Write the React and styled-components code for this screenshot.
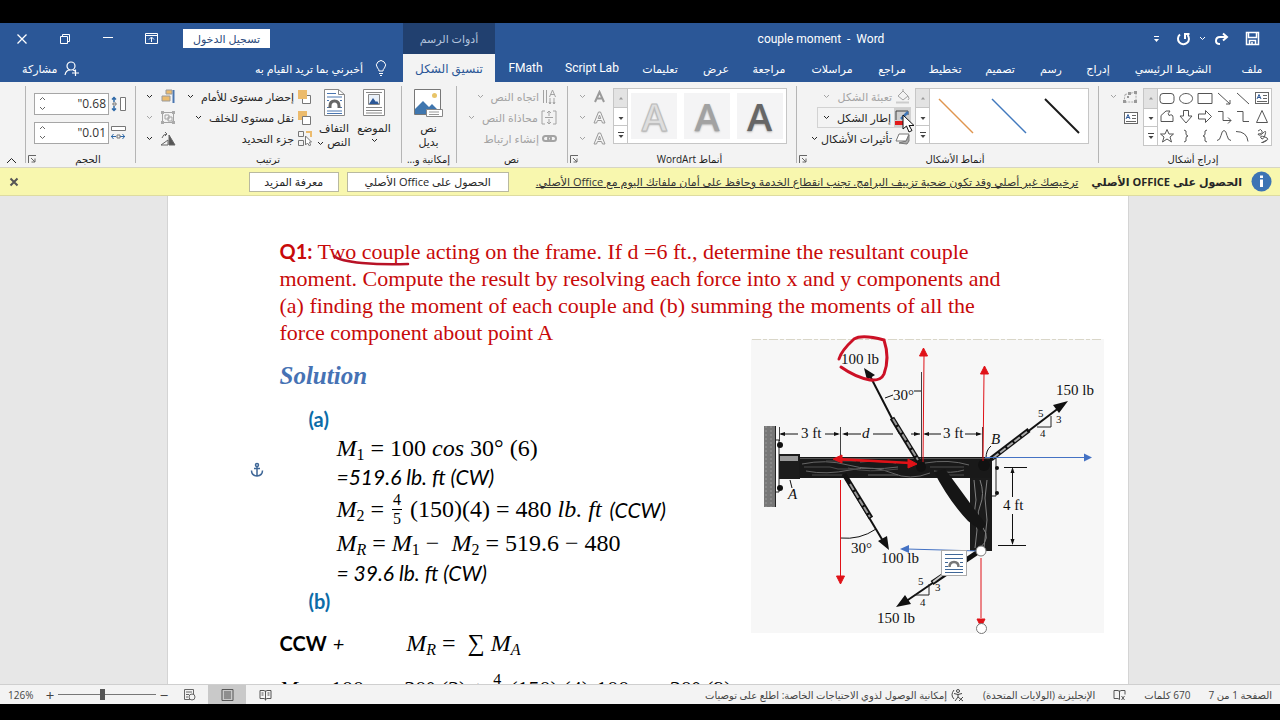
import React from "react";
import styled, { createGlobalStyle, css } from "styled-components";

const GlobalStyle = createGlobalStyle`
  * { box-sizing: border-box; }
  body { margin: 0; background: #000; }
  button { font: inherit; color: inherit; border: 0; background: none; padding: 0; margin: 0; }
`;

const blue = "#2b5797";

const Screen = styled.div`
  height: 100vh;
  min-height: 480px;
  display: flex;
  flex-direction: column;
  padding: 23px 0 16px;
  overflow: hidden;
  background: #000;
  font-family: "Open Sans", "DejaVu Sans", sans-serif;
  font-size: 11px;
  color: #262626;
`;

/* ---------- header ---------- */
const Header = styled.header`
  background: ${blue};
  color: #fff;
`;
const HeaderRow = styled.div`
  direction: rtl;
  display: grid;
  grid-template-columns: minmax(0, 785px) 92px 1fr;
  height: ${(p) => p.$h}px;
`;
const TitleArea = styled.div`
  display: flex;
  align-items: center;
`;
const QuickAccess = styled.div`
  width: 133px;
  display: flex;
  align-items: center;
  gap: 8px;
  padding-right: 20px;
`;
const IconButton = styled.button`
  display: flex;
  align-items: center;
  justify-content: center;
  flex: none;
`;
const DocTitle = styled.h1`
  flex: 1;
  margin: 0;
  text-align: center;
  direction: ltr;
  font-family: Roboto, sans-serif;
  font-size: 12px;
  font-weight: 400;
  white-space: pre;
`;
const ContextHeading = styled.div`
  display: flex;
  align-items: center;
  justify-content: center;
  background: #21406f;
  color: #b4c4de;
`;
const WindowArea = styled.div`
  direction: ltr;
  display: flex;
  align-items: center;
  padding-left: 16px;
  gap: 31px;
`;
const SignIn = styled.button`
  height: 19px;
  width: 87px;
  background: #fff;
  color: #2a4a7c;
  white-space: nowrap;
  margin-left: -6px;
`;
const Tabs = styled.nav`
  display: flex;
`;
const Tab = styled.button`
  width: ${(p) => p.$w}px;
  white-space: nowrap;
  ${(p) => p.$latin && css`font-family: Roboto, sans-serif; font-size: 12px;`}
  ${(p) => p.$active && css`background: #f3f3f3; color: ${blue}; font-size: 12px;`}
`;
const TellArea = styled.div`
  display: flex;
  align-items: center;
  justify-content: space-between;
  padding: 0 16px 0 22px;
`;
const TellMe = styled.button`
  display: flex;
  align-items: center;
  gap: 12px;
  white-space: nowrap;
`;
const Share = styled(TellMe)`
  gap: 6px;
`;

/* ---------- ribbon ---------- */
const Ribbon = styled.section`
  direction: rtl;
  display: flex;
  height: 86px;
  background: #f3f3f3;
  border-bottom: 1px solid #d6d5c4;
  padding-right: 8px;
`;
const Group = styled.div`
  flex: 0 1 ${(p) => p.$w}px;
  position: relative;
  display: flex;
  flex-direction: column;
  padding-top: 4px;
  &::after {
    content: "";
    position: absolute;
    left: 0;
    top: 4px;
    bottom: 4px;
    border-left: 1px solid #b5b5b5;
  }
`;
const GroupBody = styled.div`
  display: flex;
  height: 64px;
  padding: 0 ${(p) => p.$pad || 0}px;
  justify-content: ${(p) => p.$justify || "flex-start"};
`;
const GroupLabel = styled.div`
  height: 17px;
  display: flex;
  align-items: center;
  justify-content: center;
  white-space: nowrap;
  font-size: 10px;
  color: #222;
  padding-right: ${(p) => (p.$shift ? 16 : 0)}px;
  direction: ltr;
  & > span { direction: rtl; }
  padding-right: 0;
  padding-left: ${(p) => (p.$shift ? 16 : 0)}px;
`;
const LauncherButton = styled.button`
  position: absolute;
  left: 3px;
  bottom: 4px;
  display: flex;
`;
const Collapse = styled.div`
  flex: 1;
  display: flex;
  align-items: flex-end;
  justify-content: flex-end;
  padding: 0 0 3px 6px;
`;
const GalleryBox = styled.div`
  display: flex;
  flex: none;
  height: ${(p) => p.$h || 56}px;
  width: ${(p) => p.$w}px;
  margin-top: 2px;
  background: #fff;
  border: 1px solid #c6c6c6;
`;
const GalleryItems = styled.div`
  flex: 1;
  display: grid;
  grid-template-columns: repeat(${(p) => p.$cols}, 1fr);
  place-items: center;
`;
const ScrollCol = styled.div`
  width: 14px;
  display: grid;
  grid-template-rows: repeat(3, 1fr);
  border-right: 1px solid #c6c6c6;
`;
const ScrollButton = styled.button`
  display: flex;
  align-items: center;
  justify-content: center;
  background: ${(p) => (p.$off ? "#e3e3e3" : "#fff")};
  & + & { border-top: 1px solid #c6c6c6; }
`;
const WordArtTile = styled.button`
  width: 46px;
  height: 46px;
  background: #f4f4f5;
  color: ${(p) => p.$c};
  font-size: 38px;
  line-height: 46px;
  font-weight: 600;
  text-shadow: 0 1px 2px #aaa;
  -webkit-text-stroke: ${(p) => (p.$outline ? "1px #bbb" : "0")};
`;
const Column = styled.div`
  display: flex;
  flex-direction: column;
  width: ${(p) => (p.$w ? p.$w + "px" : "auto")};
  padding-right: ${(p) => p.$inset || 0}px;
  padding-top: ${(p) => p.$top || 0}px;
`;
const Command = styled.button`
  display: flex;
  align-items: center;
  gap: ${(p) => p.$gap || 3}px;
  height: 21px;
  padding: 0 1px;
  white-space: nowrap;
  color: ${(p) => (p.$off ? "#a3a3a3" : "#262626")};
  ${(p) => p.$hot && css`outline: 1px solid #d2d2d2; outline-offset: -1px;`}
  & > svg { flex: none; }
  & > svg + svg { margin-right: 4px; }
`;
const HotIcon = styled.span`
  position: relative;
  display: flex;
  padding: 2px 1px;
  background: #cfcfcf;
`;
const Pointer = styled.svg`
  position: absolute;
  left: 8px;
  top: 6px;
  z-index: 2;
`;
const BigButton = styled.button`
  display: flex;
  flex-direction: column;
  align-items: center;
  width: ${(p) => p.$w}px;
  padding-top: 3px;
  line-height: 14px;
  white-space: nowrap;
`;
const BigIcon = styled.span`
  height: 32px;
`;
const SizeRow = styled.label`
  display: flex;
  align-items: center;
  gap: 1px;
  height: 29px;
  & > svg { flex: none; }
`;
const SizeField = styled.span`
  display: flex;
  align-items: center;
  flex: none;
  width: 75px;
  height: 22px;
  background: #fff;
  border: 1px solid #a6a6a6;
  padding: 0 2px 0 4px;
`;
const SizeInput = styled.input`
  flex: 1;
  min-width: 0;
  border: 0;
  padding: 0;
  background: none;
  font: 12px "Open Sans", sans-serif;
  color: #333;
  direction: rtl;
  outline: 0;
`;
const Spin = styled.span`
  display: flex;
  flex-direction: column;
  gap: 5px;
  color: #666;
`;

/* ---------- message bar ---------- */
const MessageBar = styled.section`
  direction: rtl;
  display: flex;
  align-items: center;
  height: 28px;
  background: #f8f7ae;
  border-bottom: 1px solid #dedca0;
  padding: 0 8px 0 9px;
  white-space: nowrap;
`;
const MessageTitle = styled.strong`
  margin: 0 9px 0 13px;
`;
const MessageLink = styled.a`
  color: #333;
  text-decoration: underline;
`;
const MessageButton = styled.button`
  width: ${(p) => p.$w}px;
  height: 20px;
  background: #fff;
  border: 1px solid #b9b9a0;
  margin-right: ${(p) => p.$gap}px;
`;
const Spacer = styled.div`
  flex: 1;
`;

/* ---------- document ---------- */
const Workspace = styled.main`
  flex: 1;
  min-height: 0;
  overflow: hidden;
  display: flex;
  justify-content: center;
  padding-left: 15px;
  background: #e7e7e7;
`;
const Page = styled.article`
  width: 962px;
  height: 1200px;
  flex: none;
  background: #fff;
  border: solid #d4d4d4;
  border-width: 0 1px;
  padding: 42px 24px 0 112px;
  font-family: Lato, sans-serif;
  font-size: 20px;
  color: #000;
`;
const Question = styled.p`
  margin: 0;
  font-family: "Liberation Serif", serif;
  font-size: 22px;
  line-height: 27px;
  color: #c80a0a;
  white-space: nowrap;
`;
const Line = styled.span`
  display: block;
`;
const Inked = styled.span`
  position: relative;
`;
const InkLine = styled.svg`
  position: absolute;
  left: 14px;
  top: 15px;
`;
const QLabel = styled.b`
  font-family: Lato, sans-serif;
  font-size: 20px;
`;
const Columns = styled.div`
  display: flex;
  align-items: flex-start;
  justify-content: space-between;
`;
const Solution = styled.h2`
  margin: 16px 0 14px;
  font: italic bold 25px/28px "Liberation Serif", serif;
  color: #4672b4;
`;
const PartLabel = styled.h3`
  margin: 0;
  padding-left: 29px;
  font-size: 20px;
  line-height: 30px;
  color: #0c6ca8;
`;
const Step = styled.div`
  position: relative;
  display: flex;
  align-items: center;
  gap: ${(p) => p.$gap || 6}px;
  height: ${(p) => p.$h || 28}px;
  padding-left: ${(p) => (p.$flush ? 0 : 57)}px;
  margin-top: ${(p) => p.$mt || 0}px;
  white-space: nowrap;
  ${(p) => p.$italic && css`font-style: italic; font-size: 21px;`}
`;
const MathText = styled.span`
  font-family: "Liberation Serif", serif;
  font-size: ${(p) => (p.$small ? 22 : 24)}px;
  font-style: normal;
  sub { font-size: 16px; line-height: 0; vertical-align: -4px; }
`;
const Frac = styled.span`
  display: inline-flex;
  flex-direction: column;
  align-items: center;
  font: 16px/17px "Liberation Serif", serif;
  & > span:first-child { border-bottom: 1px solid #000; padding: 0 1px 1px; }
`;
const Anchor = styled.svg`
  position: absolute;
  left: -30px;
  top: 0;
`;
const Sum = styled.div`
  margin-left: 56px;
`;
const Figure = styled.figure`
  margin: -7px 0 0;
  svg { display: block; overflow: visible; }
`;

/* ---------- status bar ---------- */
const StatusBar = styled.footer`
  display: flex;
  align-items: center;
  height: 20px;
  background: #f3f3f3;
  border-top: 1px solid #cfcfcf;
  padding: 0 8px;
  font-size: 10px;
  color: #444;
  white-space: nowrap;
`;
const StatusSide = styled.div`
  direction: ${(p) => (p.$rtl ? "rtl" : "ltr")};
  display: flex;
  align-items: center;
  height: 100%;
  gap: ${(p) => p.$gap || 0}px;
`;
const ZoomValue = styled.button`
  width: 36px;
  text-align: left;
`;
const ZoomStep = styled.button`
  width: 12px;
  font-size: 15px;
  line-height: 18px;
`;
const ZoomSlider = styled.input`
  appearance: none;
  width: 98px;
  height: 11px;
  margin: 0 2px;
  background: linear-gradient(#777, #777) center / 100% 1px no-repeat;
  &::-webkit-slider-thumb { appearance: none; width: 5px; height: 11px; background: #555; }
`;
const ViewButton = styled(IconButton)`
  width: 38px;
  height: 100%;
  background: ${(p) => (p.$on ? "#c9c9c9" : "none")};
`;

/* ---------- icons ---------- */
const Ico = ({ w = 16, h = w, box, children, stroke = "currentColor", sw = 1, fill = "none" }) => (
  <svg width={w} height={h} viewBox={box || `0 0 ${w} ${h}`} fill={fill} stroke={stroke} strokeWidth={sw} aria-hidden="true">
    {children}
  </svg>
);
const Caret = ({ up }) => (
  <Ico w={7} h={5}>
    <path d={up ? "M1 4 3.500 1.500 6 4" : "M1 1 3.500 3.500 6 1"} />
  </Ico>
);
const Tri = ({ kind }) => (
  <Ico w={8} h={8} stroke={kind === "up" ? "#999" : "#444"}>
    {kind === "more" && <path d="M1 1.500h6" />}
    <path fill={kind === "up" ? "#999" : "#444"} stroke="none" d={kind === "up" ? "M2 5.500 4 3l2 2.500z" : "M1.500 4h5L4 7z"} />
  </Ico>
);
const LauncherIcon = () => (
  <Ico w={8} stroke="#666">
    <path d="M.5 8V.5H8M3 3l4 4M7 3.500V7H3.500" />
  </Ico>
);
const TextBoxIcon = () => (
  <Ico w={14} h={12} stroke="#666">
    <rect x=".5" y=".5" width="13" height="11" fill="#fff" />
    <path stroke={blue} d="M2 7l2-4.500L6 7M3 5.500h2" />
    <path d="M8 3.500h4M8 6.500h4M2 9.500h10" />
  </Ico>
);
const EditShapeIcon = () => (
  <Ico w={16} h={14} stroke="#aaa">
    <path strokeDasharray="2 1" d="M3 4.500 14 2v10H2z" />
    <path fill="#999" stroke="none" d="M1 10h3v3H1zM6 2h3v3H6zM12 1h3v3h-3zM12 10h3v3h-3zM5 6h2v2H5z" />
  </Ico>
);
const Launcher = ({ label }) => (
  <LauncherButton aria-label={label}>
    <LauncherIcon />
  </LauncherButton>
);
const Scroller = () => (
  <ScrollCol>
    <ScrollButton $off aria-label="السابق"><Tri kind="up" /></ScrollButton>
    <ScrollButton aria-label="التالي"><Tri kind="down" /></ScrollButton>
    <ScrollButton aria-label="المزيد"><Tri kind="more" /></ScrollButton>
  </ScrollCol>
);

const SHAPES = [
  null,
  "M2 2l12 11",
  "M2 2l12 11M14 9v4h-4",
  "M1 2.500h14v10H1z",
  "M8 2.500a6.500 5 0 1 0 .1 0z",
  "M4 2.500h8q3 0 3 3v4q0 3-3 3H4q-3 0-3-3v-4q0-3 3-3z",
  "M8 1.500 13.500 13.500h-11z",
  "M2 2.500h6v10h6",
  "M2 2.500h5v9h8M12 8.500l3 3-3 3",
  "M1.500 5h7V1.500l6 6-6 6V10h-7z",
  "M5.500 1.500h5V7H14L8 14 2 7h3.500z",
  "M2 12.500V6.500L7 2h4Q8 5 10 6.500q4-2 4 2v4z",
  "M4 3q3-3 4 0T4 6q1 3 5-1t2 2-4 3 4-1-1 5 3-2",
  "M1 3.500q11 0 12 10",
  "M1 12.500q3 0 4-5t3-5 3 5 4 5",
  "M10 2q-3 0-2 4-.5 2-2 2 2 0 2 2-1 4 2 4",
  "M6 2q3 0 2 4 .5 2 2 2-2 0-2 2 1 4-2 4",
  "M8 1.500l2 4.500h4.500L11 9l1.500 5L8 11l-4.500 3L5 9 1.500 6H6z",
];

const TABS = [
  ["ملف", 56],
  ["الشريط الرئيسي", 102],
  ["إدراج", 48],
  ["رسم", 46],
  ["تصميم", 56],
  ["تخطيط", 54],
  ["مراجع", 52],
  ["مراسلات", 68],
  ["مراجعة", 58],
  ["عرض", 48],
  ["تعليمات", 64],
  ["Script Lab", 72, true],
  ["FMath", 61, true],
];

function AppHeader() {
  return (
    <Header>
      <HeaderRow $h={31}>
        <TitleArea>
          <QuickAccess>
            <IconButton aria-label="حفظ">
              <Ico w={15} sw={1.500} box="0 0 15 15">
                <path d="M1.500 1.500h12v12h-12zM3.500 1.500v5h8v-5M4.500 13.500v-4h6v4M7 11v2" />
              </Ico>
            </IconButton>
            <Spacer />
            <IconButton aria-label="إعادة">
              <Ico w={15} h={14} sw={2}>
                <path d="M9 1.500 13 5 9 8.500M13 5H6Q2 5 2 9q0 3 4 3" />
              </Ico>
            </IconButton>
            <IconButton aria-label="خيارات"><Caret /></IconButton>
            <IconButton aria-label="تراجع">
              <Ico w={15} h={14} sw={2}>
                <path d="M4 2.500A5.500 5.500 0 1 0 11.500 3M13.500 2H9v5" />
              </Ico>
            </IconButton>
            <Spacer />
            <IconButton aria-label="تخصيص"><Ico w={7} h={8}><path d="M1 1.500h5" /><path d="M1 4h5L3.500 7z" fill="#fff" stroke="none" /></Ico></IconButton>
            <Spacer />
          </QuickAccess>
          <DocTitle>{"couple moment  -  Word"}</DocTitle>
        </TitleArea>
        <ContextHeading>أدوات الرسم</ContextHeading>
        <WindowArea>
          <IconButton aria-label="إغلاق"><Ico w={12} sw={1.300}><path d="M1.500 1.500l9 9M10.500 1.500l-9 9" /></Ico></IconButton>
          <IconButton aria-label="استعادة"><Ico w={12}><path d="M1.500 3.500h7v7h-7zM3.500 3.500v-2h7v7h-2" /></Ico></IconButton>
          <IconButton aria-label="تصغير"><Ico w={12}><path d="M1 4.500h10" /></Ico></IconButton>
          <IconButton aria-label="خيارات عرض الشريط">
            <Ico w={13} h={11}><path d="M.5.5h12v10H.5zM.5 2.500h12M6.500 9V4.500M4 6.500l2.500-2.500L9 6.500" /></Ico>
          </IconButton>
          <SignIn>تسجيل الدخول</SignIn>
        </WindowArea>
      </HeaderRow>
      <HeaderRow $h={28}>
        <Tabs>
          {TABS.map(([name, w, latin]) => (
            <Tab key={name} $w={w} $latin={latin}>{name}</Tab>
          ))}
        </Tabs>
        <Tab $w={92} $active>تنسيق الشكل</Tab>
        <TellArea>
          <TellMe>
            <Ico w={12} h={16}><path d="M4 11Q4 9 2.500 8a4.500 4.500 0 1 1 7 0Q8 9 8 11zM4 13.500h4M5 15.500h2" /></Ico>
            أخبرني بما تريد القيام به
          </TellMe>
          <Share>
            <Ico w={15} h={15} sw={1.200}><circle cx="7" cy="5" r="4" /><path d="M1 14q1-5 5-5M9 9l2 1M8 12h7M11.500 8.500V15" /></Ico>
            مشاركة
          </Share>
        </TellArea>
      </HeaderRow>
    </Header>
  );
}

function ShapesGroup() {
  return (
    <Group $w={174}>
      <GroupBody>
        <GalleryBox $w={129} $h={58}>
          <GalleryItems $cols={6}>
            {SHAPES.map((d, i) => (
              <IconButton key={i} aria-label={`شكل ${i + 1}`}>
                {d ? <Ico w={16} h={15} stroke="#555"><path d={d} /></Ico> : <TextBoxIcon />}
              </IconButton>
            ))}
          </GalleryItems>
          <Scroller />
        </GalleryBox>
        <Column $inset={4}>
          <Command $off aria-label="تحرير الشكل" $gap={1}><EditShapeIcon /><Caret /></Command>
          <Command aria-label="مربع نص"><TextBoxIcon /></Command>
        </Column>
      </GroupBody>
      <GroupLabel $shift><span>إدراج أشكال</span></GroupLabel>
    </Group>
  );
}

function ShapeStylesGroup() {
  return (
    <Group $w={302}>
      <GroupBody $pad={9}>
        <GalleryBox $w={174}>
          <GalleryItems $cols={3}>
            {["#1a1a1a", "#4179bd", "#e0954f"].map((c) => (
              <IconButton key={c} aria-label="نمط الخط">
                <Ico w={38} stroke={c} sw={c === "#1a1a1a" ? 2 : 1.500}><path d="M2 2l34 34" /></Ico>
              </IconButton>
            ))}
          </GalleryItems>
          <Scroller />
        </GalleryBox>
        <Column $w={98} $inset={4}>
          <Command $off>
            <Ico w={15}><path d="M3 7l5-5 5 5-5 4zM8 2V0M13 7q2 3 0 4" /><path d="M1 13.500h13" stroke="#ccc" strokeWidth="2" /></Ico>
            <span>تعبئة الشكل</span><Spacer /><Caret /><Spacer />
          </Command>
          <Command $hot>
            <HotIcon>
              <Ico w={14} h={15}>
                <path d="M1 10V1h12v4" stroke="#444" />
                <path d="M6 9l7-7" stroke="#3f76b8" strokeWidth="2.500" />
                <path d="M0 11h14v4H0z" fill="#e21b1b" stroke="none" />
              </Ico>
              <Pointer width="13" height="19" viewBox="0 0 13 19">
                <path d="M1 1v14l3.500-3L7 18l3-1.500-3-5h5z" fill="#fff" stroke="#111" />
              </Pointer>
            </HotIcon>
            <span>إطار الشكل</span><Spacer /><Caret /><Spacer />
          </Command>
          <Command>
            <Ico w={15} h={14} stroke="#777"><path fill="#aaa" d="M4 11l8 1 2-3V3l-3 6z" /><path fill="#fff" d="M4 2h10l-3 7H1z" /></Ico>
            <span>تأثيرات الأشكال</span><Caret />
          </Command>
        </Column>
      </GroupBody>
      <GroupLabel $shift><span>أنماط الأشكال</span></GroupLabel>
      <Launcher label="تنسيق الشكل" />
    </Group>
  );
}

const LetterA = ({ outline }) => (
  <Ico w={13} h={13} stroke="#9a9a9a" sw={outline ? 1 : 2}>
    <path d={outline ? "M5.500 1h2L12 12H9.500L8.500 9.500h-4L3.500 12H1zM6.500 4l1.200 3.500H5.300z" : "M2 12 6.500 2 11 12M4 8.500h5"} />
  </Ico>
);

function WordArtGroup() {
  return (
    <Group $w={229}>
      <GroupBody $pad={9}>
        <GalleryBox $w={174}>
          <GalleryItems $cols={3}>
            <WordArtTile $c="#666">A</WordArtTile>
            <WordArtTile $c="#a2a2a2">A</WordArtTile>
            <WordArtTile $c="#dedede" $outline>A</WordArtTile>
          </GalleryItems>
          <Scroller />
        </GalleryBox>
        <Column $w={36} $inset={6}>
          <Command $off aria-label="تعبئة النص"><LetterA /><Caret /></Command>
          <Command $off aria-label="إطار النص"><LetterA outline /><Caret /></Command>
          <Command $off aria-label="تأثيرات النص"><LetterA outline /><Caret /></Command>
        </Column>
      </GroupBody>
      <GroupLabel $shift><span>أنماط WordArt</span></GroupLabel>
      <Launcher label="تنسيق تأثيرات النص" />
    </Group>
  );
}

function TextGroup() {
  return (
    <Group $w={111}>
      <GroupBody $pad={9}>
        <Column>
          <Command $off>
            <Ico w={15} h={16}><path d="M1.500 1v13M4.500 1v13M8 9v6M12 9v6M7 13l1 2 1-2M11 13l1 2 1-2M7.500 8l3-7 3 7M8.500 5.500h4" /></Ico>
            اتجاه النص<Caret />
          </Command>
          <Command $off>
            <Ico w={16} h={15}><path d="M4 1H1v13h3M12 1h3v13h-3M8 1v5M8 9v5M6 3l2-2 2 2M6 12l2 2 2-2M4 7.500h8" /></Ico>
            محاذاة النص<Caret />
          </Command>
          <Command $off>
            <Ico w={15} h={10} sw={2}><rect x="1" y="2" width="8" height="5" rx="2.500" /><rect x="6" y="2" width="8" height="5" rx="2.500" /></Ico>
            إنشاء ارتباط
          </Command>
        </Column>
      </GroupBody>
      <GroupLabel><span>نص</span></GroupLabel>
    </Group>
  );
}

function AltTextGroup() {
  return (
    <Group $w={55}>
      <GroupBody $justify="center">
        <BigButton $w={50}>
          <BigIcon>
            <Ico w={29} h={29} stroke="none">
              <path d="M.5.5h26v25H.5z" fill="#fff" stroke="#777" />
              <circle cx="20.500" cy="6.500" r="2.500" fill="#e8c468" />
              <path d="M1 25v-5l8-8 6 6 3-3 5 5v5z" fill="#3f76ae" />
              <path d="M12.500 20.500h16v7h-16z" fill="#fff" stroke="#888" />
              <path d="M15 23h10M15 25.500h10" stroke="#999" />
            </Ico>
          </BigIcon>
          <span>نص</span>
          <span>بديل</span>
        </BigButton>
      </GroupBody>
      <GroupLabel><span>إمكانية و...</span></GroupLabel>
    </Group>
  );
}

const LayerIcon = ({ back }) => (
  <Ico w={15} h={14} stroke="#777">
    {back && <path d="M1 0h9v9H1z" fill="#ecbb6c" stroke="none" />}
    <path d="M5.500 5.500h8v8h-8z" fill="#fff" />
    {!back && <path d="M1 0h9v9H1z" fill="#ecbb6c" stroke="none" />}
  </Ico>
);

function ArrangeGroup() {
  return (
    <Group $w={266}>
      <GroupBody $pad={6}>
        <BigButton $w={42}>
          <BigIcon>
            <Ico w={22} h={27} stroke="#888">
              <path d="M.5.5h21v26H.5z" fill="#fff" /><path d="M3 3.500h16M3 18.500h16M3 21.500h16M3 24h16" />
              <path d="M5.500 5.500h11v10h-11z" fill="#eaf1f9" /><path d="M6 15l4-6 3 4 1-1 2 3z" fill={blue} stroke="none" />
            </Ico>
          </BigIcon>
          <span>الموضع</span>
          <Ico w={7} h={10}><path d="M1 4l2.500 2.500L6 4" /></Ico>
        </BigButton>
        <BigButton $w={38}>
          <BigIcon>
            <Ico w={21} h={27} stroke="#888">
              <path d="M.5.5h14l6 5v21H.5z" fill="#fff" /><path d="M14.500.5v5h6" />
              <path d="M3 4.500h9M3 8h15M3 22h15M3 24.500h15M3 11.500h2M16 11.500h2M3 18.500h2M16 18.500h2" stroke="#4a76b0" />
              <path d="M6 19v-2q0-5 4.500-5t4.500 5v2" stroke="#666" strokeWidth="3" />
            </Ico>
          </BigIcon>
          <span>التفاف</span>
          <span>النص <Caret /></span>
        </BigButton>
        <Column $w={138} $inset={2}>
          <Command><LayerIcon />إحضار مستوى للأمام<Caret /></Command>
          <Command><LayerIcon back />نقل مستوى للخلف<Caret /></Command>
          <Command>
            <Ico w={15} stroke="#777"><path d="M1.500.5h5v5h-5zM1.500 9.500h5v5h-5z" /><path d="M9 1h5v5" stroke="#ecbb6c" strokeWidth="2" /><path d="M8.500 5v9l2-2 2 3 1-1-1-3h2z" fill="#fff" /></Ico>
            <span>جزء التحديد</span>
          </Command>
        </Column>
        <Column>
          <Command aria-label="محاذاة">
            <Ico w={16} h={15}><path d="M13.500 1v13" stroke="#4a76b0" strokeWidth="2" /><path d="M6 1h6v4H6zM2 7h8v5H2z" fill="#ecbb6c" stroke="#999" /></Ico><Caret />
          </Command>
          <Command $off aria-label="تجميع">
            <Ico w={16} h={15}><path d="M2.500 2.500h11v10h-11zM5 5h4v4H5zM8 7h4v4H8z" /><path d="M1 1h3v3H1zM12 1h3v3h-3zM1 11h3v3H1zM12 11h3v3h-3z" fill="#aaa" stroke="none" /></Ico><Caret />
          </Command>
          <Command aria-label="استدارة">
            <Ico w={16} h={14} stroke="#666"><path d="M9 3v10h6z" fill="#555" /><path d="M8 13H1l7-5zM2 6q1-4 5-4M5 0l2 2-2 2" /></Ico><Caret />
          </Command>
        </Column>
      </GroupBody>
      <GroupLabel><span>ترتيب</span></GroupLabel>
    </Group>
  );
}

function SizeBox({ label, value, vertical }) {
  return (
    <SizeRow aria-label={label}>
      <Ico w={16} h={16} stroke="#777">
        {vertical ? (
          <><path d="M10.500 1.500h5v13h-5z" fill="#fff" /><path d="M4 1v5M4 10v5M2 3.500l2-2 2 2M2 12.500l2 2 2-2" stroke="#2e69a8" strokeWidth="1.500" /><path d="M3 7h3v2H3z" /></>
        ) : (
          <><path d="M1.500 1.500h14v4h-14z" fill="#fff" /><path d="M1 11.500h5M10 11.500h5M3.500 9l-2 2.500 2 2.500M12.500 9l2 2.500-2 2.500" stroke="#2e69a8" /><path d="M7 10h3v3H7z" /></>
        )}
      </Ico>
      <SizeField>
        <SizeInput defaultValue={value} aria-label={label} />
        <Spin><Caret up /><Caret /></Spin>
      </SizeField>
    </SizeRow>
  );
}

function AppRibbon() {
  return (
    <Ribbon>
      <ShapesGroup />
      <ShapeStylesGroup />
      <WordArtGroup />
      <TextGroup />
      <AltTextGroup />
      <ArrangeGroup />
      <Group $w={109}>
        <GroupBody $pad={9}>
          <Column $top={3}>
            <SizeBox label="الارتفاع" value={'0.68"'} vertical />
            <SizeBox label="العرض" value={'0.01"'} />
          </Column>
        </GroupBody>
        <GroupLabel $shift><span>الحجم</span></GroupLabel>
        <Launcher label="الحجم" />
      </Group>
      <Collapse>
        <IconButton aria-label="طي الشريط"><Ico w={11} h={7}><path d="M1 6l4.500-4.500L10 6" /></Ico></IconButton>
      </Collapse>
    </Ribbon>
  );
}

function LicenseBar() {
  return (
    <MessageBar>
      <Ico w={21} stroke="none">
        <circle cx="10.500" cy="10.500" r="10" fill="#3c74b4" />
        <path d="M9 8.500h3V16H9zM9 4.500h3v2.500H9z" fill="#fff" />
      </Ico>
      <MessageTitle>الحصول على OFFICE الأصلي</MessageTitle>
      <MessageLink href="#license">
        ترخيصك غير أصلي وقد تكون ضحية تزييف البرامج. تجنب انقطاع الخدمة وحافظ على أمان ملفاتك اليوم مع Office الأصلي.
      </MessageLink>
      <MessageButton $w={162} $gap={27}>الحصول على Office الأصلي</MessageButton>
      <MessageButton $w={90} $gap={8}>معرفة المزيد</MessageButton>
      <Spacer />
      <IconButton aria-label="إغلاق"><Ico w={10} stroke="#555" sw={2}><path d="M1.500 1.500l7 7M8.500 1.500l-7 7" /></Ico></IconButton>
    </MessageBar>
  );
}

const M = ({ s }) => (<><i>M</i><sub>{s}</sub></>);

function ForceTriangle({ x, y }) {
  return <path d={`M${x} ${y}h14v-11`} fill="none" stroke="#222" />;
}

function FrameFigure() {
  return (
    <Figure>
      <svg width="353" height="294" viewBox="751 339 353 294" fontFamily="Liberation Serif, serif" fontSize="15" fill="#111">
        <rect x="751" y="339" width="353" height="294" fill="#f7f7f7" />
        <path d="M752 339.500h351" stroke="#d9d6c8" strokeDasharray="9 2 4 2" />
        <rect x="764" y="426" width="11" height="81" fill="#777" />
        <path d="M766 426v81M771 426v81" stroke="#999" strokeDasharray="2 2" />
        <path d="M775.500 426v81" stroke="#222" />
        <path d="M776 440h3v52h-3" fill="#fff" stroke="#222" />
        <circle cx="780" cy="445" r="3" /><circle cx="780" cy="488" r="3" />
        <rect x="779" y="454" width="21" height="25" fill="#1c1c1c" />
        <rect x="780" y="456" width="18" height="5" fill="#999" />
        <path d="M799 457h193v21H799z" fill="#191919" />
        <g stroke="#666" fill="none">
          <path d="M800 458.500h190" stroke="#555" />
          <path d="M802 464q24-5 46 1t50 2M806 471q20 4 44-1t42 3 38 0M860 462q20-2 36 1M925 463q24-4 44 2M934 471q18 3 30-1M868 475h30" />
          <path d="M804 467h26l8 2h20M812 475h34M848 468q20 5 50 1M930 467h34M940 475h24M826 461h30" stroke="#4c4c4c" />
        </g>
        <path d="M970 478h22v73h-22z" fill="#1b1b1b" />
        <path d="M974 480l2 20-2 15 3 15-2 18M980 480q5 14 0 26t3 22-3 20M987 480l-2 18 2 22-3 28" stroke="#808080" fill="none" />
        <path d="M992 458h4v38h-4" fill="#f7f7f7" stroke="#222" />
        <circle cx="997" cy="468" r="2" /><circle cx="997" cy="493" r="2" />
        <path d="M934 472l11-3q14 19 33 45l8 10-5 7-13-10q-19-20-34-49z" fill="#151515" />
        <circle cx="921" cy="467" r="5" /><circle cx="984" cy="465" r="6" />

        <g stroke="#111" fill="none">
          <path d="M779.500 427v14M840.500 427v30M921.500 372v90M982.500 427v30" strokeWidth=".8" />
          <path d="M781 434h17M825 434h13M844 434h17M873 434h20M911 434h9M925 434h16M965 434h15" />
          <path d="M868 372l32 62" strokeWidth="2" />
          <path d="M892 418l27 44" strokeWidth="5" />
          <path d="M893 419l25 41" stroke="#999" strokeWidth="2" strokeDasharray="7 2" />
          <path d="M989 461l75-57" strokeWidth="2" />
          <path d="M991 459l38-29" strokeWidth="5" />
          <path d="M993 458l35-27" stroke="#aaa" strokeWidth="2" strokeDasharray="7 2" />
          <path d="M843 474l43 72" strokeWidth="2" />
          <path d="M844 474l27 44" strokeWidth="5" />
          <path d="M850 484l20 33" stroke="#999" strokeWidth="2" strokeDasharray="7 2" />
          <path d="M978 552l-76 52" strokeWidth="2" />
          <path d="M978 552l-46 31" strokeWidth="5" />
          <path d="M945 573l-12 9" stroke="#ccc" strokeWidth="2" />
          <path d="M840 538q20 2 36-9M885 398l8-3M914 391h7M991 446q-5 4-5 12M790 480l2 8" />
          <path d="M1004 467.500h23M998 545.500h28M1012.500 469v28M1012.500 514v30" />
          <ForceTriangle x={1037} y={427} />
          <ForceTriangle x={915} y={595} />
        </g>
        <g>
          <path d="M864 368l11 7-8 5zM1068 401l-15 4 6 8zM889 550l-11-9 9-5zM896 607l9-12 6 9z" />
          <path d="M779 434l6-2v4zM840 434l-6-2v4zM842 434l6-2v4zM920 434l-6-2v4zM923 434l6-2v4zM982 434l-6-2v4zM1012.500 467l-2 6h4zM1012.500 545l-2-6h4z" />
        </g>
        <text x="841" y="364">100 lb</text>
        <text x="893" y="400">30°</text>
        <text x="1056" y="395">150 lb</text>
        <text x="801" y="438">3 ft</text>
        <text x="862" y="438" fontStyle="italic">d</text>
        <text x="943" y="438">3 ft</text>
        <text x="991" y="444" fontStyle="italic">B</text>
        <text x="788" y="499" fontStyle="italic">A</text>
        <text x="851" y="553">30°</text>
        <text x="881" y="563">100 lb</text>
        <text x="877" y="623">150 lb</text>
        <text x="1003" y="510">4 ft</text>
        <g fontSize="11">
          <text x="1038" y="417">5</text><text x="1056" y="423">3</text><text x="1040" y="437">4</text>
          <text x="918" y="585">5</text><text x="935" y="591">3</text><text x="920" y="606">4</text>
        </g>

        <g stroke="#e01218" fill="#e01218">
          <path d="M923 462l1-106M983 461l1-87M840.500 480v98M981 558v60M838 460l72 3" fill="none" />
          <path d="M838 459l72 4" strokeWidth="2.500" />
          <path d="M923.500 348l4 8h-8zM984.500 366l4 8h-8zM840.500 584l4-8h-8zM981 627l4-8h-8zM833 459l9-4v8zM917 464l-9-5v9z" />
        </g>
        <g stroke="#4472c4" fill="#4472c4">
          <path d="M985 457.500h100M906 549l74 2" fill="none" />
          <path d="M1092 457.500l-8-4v8zM900 549l9-4v8z" stroke="none" />
        </g>
        <circle cx="981" cy="551" r="5" fill="#fff" stroke="#777" />
        <circle cx="981.500" cy="628.500" r="5" fill="#fff" stroke="#777" />
        <rect x="941.500" y="550.500" width="25" height="25" fill="#fff" stroke="#aaa" />
        <path d="M945 554.500h18M945 558.500h18M945 562.500h3M960 562.500h3M945 566.500h3M960 566.500h3M945 569.500h18M945 572.500h18" stroke="#3f6797" />
        <path d="M949.500 567q0-5 4.500-5t4.500 5" fill="none" stroke="#777" strokeWidth="2.500" />
        <path d="M839 359Q841 351 854 339Q862 334 884 340Q890 358 884 374Q881 381 870 380Q855 377 841 367" fill="none" stroke="#cc1126" strokeWidth="3" strokeLinecap="round" />
      </svg>
    </Figure>
  );
}

function Document() {
  return (
    <Workspace>
      <Page>
        <Question>
          <Line>
            <QLabel>Q1:</QLabel>{" "}
            <Inked>
              Two couple
              <InkLine width="80" height="14" viewBox="0 0 80 14" aria-hidden="true">
                <path d="M2 2Q8 7 30 9T76 10" fill="none" stroke="#b81226" strokeWidth="2.500" strokeLinecap="round" />
              </InkLine>
            </Inked>{" "}
            acting on the frame. If d =6 ft., determine the resultant couple
          </Line>
          <Line>moment. Compute the result by resolving each force into x and y components and</Line>
          <Line>(a) finding the moment of each couple and (b) summing the moments of all the</Line>
          <Line>force component about point A</Line>
        </Question>
        <Columns>
          <div>
            <Solution>Solution</Solution>
            <PartLabel>(a)</PartLabel>
            <Step><MathText><M s="1" /> = 100 <i>cos</i> 30° (6)</MathText></Step>
            <Step $italic>
              <Anchor width="14" height="16" viewBox="0 0 14 16" fill="none" stroke="#3f6797" strokeWidth="1.500">
                <circle cx="7" cy="3" r="1.500" /><path d="M7 5v9M4 6.500h6M1.500 8.500q0 5 5.500 5.500 5.500-.5 5.500-5.500" />
              </Anchor>
              =519.6 lb. ft (CW)
            </Step>
            <Step $h={38} $gap={8} $italic>
              <MathText><M s="2" /> =</MathText>
              <Frac><span>4</span><span>5</span></Frac>
              <MathText>(150)(4) = 480 <i>lb. ft</i></MathText>
              (CCW)
            </Step>
            <Step $h={30}><MathText><M s={<i>R</i>} /> = <M s="1" /> −&nbsp; <M s="2" /> = 519.6 − 480</MathText></Step>
            <Step $italic>= 39.6 lb. ft (CW)</Step>
            <PartLabel>(b)</PartLabel>
            <Step $flush $h={30} $mt={12}>
              <b>CCW</b> <i>+</i>
              <Sum><MathText><M s={<i>R</i>} /> = &nbsp;∑ <M s={<i>A</i>} /></MathText></Sum>
            </Step>
            <Step $flush $h={38} $gap={8} $mt={12}>
              <MathText $small><M s={<i>R</i>} /> = 100 <i>cos</i> 30° (3) +</MathText>
              <Frac><span>4</span><span>5</span></Frac>
              <MathText $small>(150) (4)-100 <i>cos</i> 30° (9)</MathText>
            </Step>
          </div>
          <FrameFigure />
        </Columns>
      </Page>
    </Workspace>
  );
}

function Status() {
  return (
    <StatusBar>
      <StatusSide>
        <ZoomValue>126%</ZoomValue>
        <ZoomStep aria-label="تكبير">+</ZoomStep>
        <ZoomSlider type="range" min="0" max="100" defaultValue="45" aria-label="تكبير/تصغير" />
        <ZoomStep aria-label="تصغير">−</ZoomStep>
        <ViewButton aria-label="تخطيط ويب"><Ico w={13} h={12} stroke="#666"><path d="M1.500.5h9v10h-9zM3 3h6M3 5.500h3M3 8h2" /><circle cx="9" cy="8" r="3" fill="#f3f3f3" /></Ico></ViewButton>
        <ViewButton $on aria-label="تخطيط الطباعة"><Ico w={13} h={12} stroke="#555"><path d="M1 .5h11v11H1zM3 3h7M3 5h7M3 7h7M3 9h7" /></Ico></ViewButton>
        <ViewButton aria-label="وضع القراءة"><Ico w={13} h={12} stroke="#555"><path d="M6.500 1.500v10M1 1.500h4l1.500 1L8 1.500h4v8H8l-1.500 1-1.500-1H1zM2.500 4h2M2.500 6h2M8.500 4h2M8.500 6h2" /></Ico></ViewButton>
      </StatusSide>
      <Spacer />
      <StatusSide $rtl $gap={18}>
        <span>الصفحة 1 من 7</span>
        <span>670 كلمات</span>
        <Ico w={13} h={12} stroke="#555"><path d="M6.500 1.500v9M1 1.500h4l1.500 1L8 1.500h4v4M1 1.500v8h4l1.500 1M8.500 7l3 4M11.500 7l-3 4" /></Ico>
        <span>الإنجليزية (الولايات المتحدة)</span>
        <StatusSide $rtl $gap={4}>
          <Ico w={14} h={14} stroke="#444"><circle cx="7" cy="3" r="1.500" /><path d="M3 5.500l4 1 4-1M7 6v3l-3 4M7 9l5 4M12 9l-4 4M3 2Q-1 7 3 11" /></Ico>
          <span>إمكانية الوصول لذوي الاحتياجات الخاصة: اطلع على توصيات</span>
        </StatusSide>
      </StatusSide>
    </StatusBar>
  );
}

export default function App() {
  return (
    <Screen>
      <GlobalStyle />
      <AppHeader />
      <AppRibbon />
      <LicenseBar />
      <Document />
      <Status />
    </Screen>
  );
}
